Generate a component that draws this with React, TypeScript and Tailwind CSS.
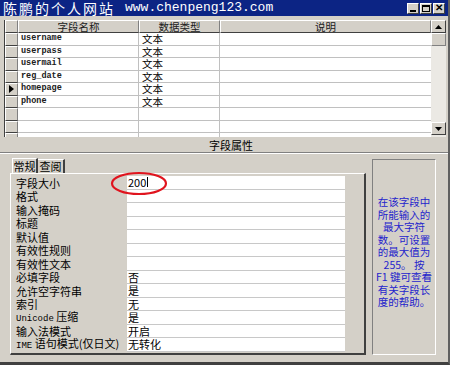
const fields = ["username", "userpass", "usermail", "reg_date", "homepage", "phone", "", "", ""];

const props: [string, string][] = [
  ["字段大小", "200"],
  ["格式", ""],
  ["输入掩码", ""],
  ["标题", ""],
  ["默认值", ""],
  ["有效性规则", ""],
  ["有效性文本", ""],
  ["必填字段", "否"],
  ["允许空字符串", "是"],
  ["索引", "无"],
  ["Unicode 压缩", "是"],
  ["输入法模式", "开启"],
  ["IME 语句模式(仅日文)", "无转化"],
];

const helpLines = ["在该字段中", "所能输入的", "最大字符", "数。可设置", "的最大值为", "255。 按", "F1 键可查看", "有关字段长", "度的帮助。"];

const cjk = { fontFamily: "'Noto Sans CJK SC', 'Noto Sans', sans-serif" };
const mono = { fontFamily: "'Liberation Mono', 'DejaVu Sans Mono', monospace" };

function Label({ text }: { text: string }) {
  // latin words in the small mono face, the rest in cjk
  const m = text.match(/^([A-Za-z]+)(.*)$/);
  if (!m) return <span>{text}</span>;
  return (
    <span>
      <span className="text-[9px]" style={mono}>{m[1]}</span>
      {m[2]}
    </span>
  );
}

function WinButton({ children }: { children: React.ReactNode }) {
  return (
    <div className="flex h-[11px] w-[12px] items-center justify-center border border-t-white border-l-white border-r-[#404040] border-b-[#404040] bg-[#d4d0c8] text-[9px] leading-none text-black">
      {children}
    </div>
  );
}

function Arrow({ up }: { up?: boolean }) {
  return (
    <svg width="7" height="4" viewBox="0 0 7 4">
      <polygon points={up ? "0,4 7,4 3.5,0" : "0,0 7,0 3.5,4"} fill="black" />
    </svg>
  );
}

export default function App() {
  return (
    <div className="flex h-[365px] w-[450px] flex-col overflow-hidden border-b-[3px] border-r-[2px] border-b-[#404040] border-r-[#606060] bg-[#d4d0c8] text-black">
      {/* title bar */}
      <div className="flex h-[16px] items-center justify-between overflow-hidden bg-[#0c2484] pl-[3px] pr-[3px]">
        <div className="flex items-center text-white">
          <span className="text-[14px] leading-[16px] tracking-[2px]" style={cjk}>陈鹏的个人网站</span>
          <span className="ml-[10px] text-[13px] leading-[16px]" style={mono}>www.chenpeng123.com</span>
        </div>
        <div className="flex gap-[1px]">
          <WinButton>
            <span className="mt-[5px] block h-[2px] w-[6px] bg-black" />
          </WinButton>
          <WinButton>
            <span className="block h-[7px] w-[8px] border border-t-2 border-black" />
          </WinButton>
          <WinButton>
            <span className="text-[10px] font-bold" style={{ fontFamily: "'Liberation Sans', sans-serif" }}>✕</span>
          </WinButton>
        </div>
      </div>

      {/* field grid */}
      <div className="ml-[4px] mt-[4px] flex h-[117px] w-[442px] overflow-hidden border-l border-[#404040] bg-white">
        <div className="flex flex-1 flex-col overflow-hidden">
          <div className="flex h-[13px] shrink-0 text-[10.5px] leading-[11px] text-[#202020]" style={cjk}>
            <div className="w-[13px] border border-t-white border-l-white border-r-[#808080] border-b-[#404040] bg-[#d4d0c8]" />
            <div className="flex w-[121px] items-center justify-center border border-t-white border-l-white border-r-[#808080] border-b-[#404040] bg-[#d4d0c8]">字段名称</div>
            <div className="flex w-[81px] items-center justify-center border border-t-white border-l-white border-r-[#808080] border-b-[#404040] bg-[#d4d0c8]">数据类型</div>
            <div className="flex flex-1 items-center justify-center border border-t-white border-l-white border-r-[#808080] border-b-[#404040] bg-[#d4d0c8]">说明</div>
          </div>
          {fields.map((f, i) => (
            <div key={i} className="flex h-[12.5px] shrink-0">
              <div className="flex w-[13px] items-center justify-center border border-t-white border-l-white border-r-[#808080] border-b-[#404040] bg-[#d4d0c8]">
                {f === "homepage" && (
                  <span className="block h-0 w-0 border-y-[4px] border-l-[5px] border-y-transparent border-l-black" />
                )}
              </div>
              <div className="flex w-[121px] items-center border-b border-r border-[#c0c0c0] pl-[3px] text-[8.5px] leading-[11px] font-bold text-[#202020]" style={mono}>
                {f}
              </div>
              <div className="flex w-[81px] items-center border-b border-r border-[#c0c0c0] pl-[3px] text-[10.5px] leading-[11px]" style={cjk}>
                {f ? "文本" : ""}
              </div>
              <div className="flex-1 border-b border-[#c0c0c0]" />
            </div>
          ))}
        </div>
        {/* scrollbar */}
        <div className="flex w-[15px] flex-col bg-[#ebe9e4]">
          <div className="flex h-[13px] items-center justify-center border border-t-white border-l-white border-r-[#404040] border-b-[#404040] bg-[#d4d0c8]">
            <Arrow up />
          </div>
          <div className="h-[13px] border border-t-white border-l-white border-r-[#808080] border-b-[#808080] bg-[#d4d0c8]" />
          <div className="flex-1" />
          <div className="mb-[2px] flex h-[13px] items-center justify-center border border-t-white border-l-white border-r-[#404040] border-b-[#404040] bg-[#d4d0c8]">
            <Arrow />
          </div>
        </div>
      </div>

      {/* properties caption */}
      <div className="flex h-[16px] items-center justify-center border-b border-[#808080] pl-[14px] text-[11px] leading-[14px]" style={cjk}>
        字段属性
      </div>
      <div className="h-px bg-white" />

      {/* properties section */}
      <div className="flex flex-1">
        <div className="ml-[10px] mt-[4px] flex w-[356px] flex-col">
          <div className="flex h-[15px] items-end text-[11px] leading-[13px]" style={cjk}>
            <div className="ml-[2px] flex h-[15px] w-[26px] items-center justify-center border-l border-t border-r-2 border-l-white border-t-white border-r-[#404040] bg-[#d4d0c8]">常规</div>
            <div className="flex h-[14px] w-[27px] items-center justify-center border-t border-r-2 border-t-white border-r-[#404040] bg-[#d4d0c8]">查阅</div>
          </div>
          <div className="flex h-[182px] flex-col border border-b-2 border-r-2 border-l-white border-t-white border-r-[#404040] border-b-[#404040] pt-[2px] text-[11px]" style={cjk}>
            {props.map(([k, v], i) => (
              <div key={i} className="flex h-[13.5px] shrink-0 items-center">
                <div className="w-[116px] pl-[5px] leading-[12px]">
                  <Label text={k} />
                </div>
                <div className="flex h-full w-[218px] items-center border-b border-[#c8c8c8] bg-white pl-[1px] leading-[12px]">
                  {v}
                  {i === 0 && <span className="ml-px inline-block h-[10px] w-px bg-black" />}
                </div>
              </div>
            ))}
          </div>
        </div>

        {/* help box */}
        <div className="ml-[6px] mt-[5px] flex h-[196px] w-[64px] flex-col items-center border border-b-white border-r-white border-l-[#808080] border-t-[#808080] pt-[36px] text-[10.5px] leading-[12.5px] text-[#2424cc]" style={cjk}>
          {helpLines.map((l) => (
            <span key={l} className="block whitespace-nowrap">{l}</span>
          ))}
        </div>
      </div>

      {/* red highlight around the field size */}
      <svg className="pointer-events-none absolute left-[110px] top-[171px]" width="58" height="25" viewBox="0 0 58 25">
        <ellipse cx="29" cy="12.5" rx="27" ry="10.5" fill="none" stroke="#e0141e" strokeWidth="2.2" />
      </svg>
    </div>
  );
}
